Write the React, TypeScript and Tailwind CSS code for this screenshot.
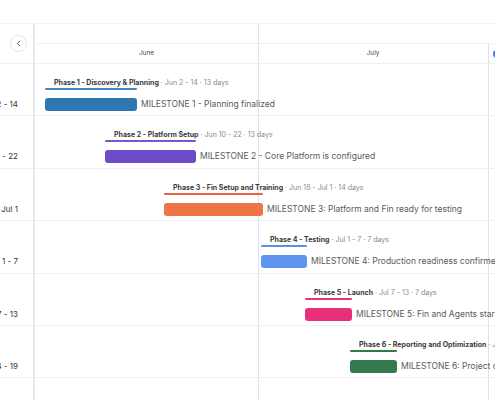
import { ChevronLeft } from "lucide-react";

type Phase = {
  id: number;
  name: string;
  range: string;
  days: number;
  left: number;
  width: number;
  bar: string;
  line: string;
  milestone: string;
};

const phases: Phase[] = [
  { id: 1, name: "Discovery & Planning", range: "Jun 2 - 14", days: 13, left: 10, width: 92, bar: "bg-[#2e77b3]", line: "bg-[#3d88c8]", milestone: "MILESTONE 1 - Planning finalized" },
  { id: 2, name: "Platform Setup", range: "Jun 10 - 22", days: 13, left: 70, width: 91, bar: "bg-[#6e4cc8]", line: "bg-[#7a55d1]", milestone: "MILESTONE 2 - Core Platform is configured" },
  { id: 3, name: "Fin Setup and Training", range: "Jun 18 - Jul 1", days: 14, left: 129, width: 99, bar: "bg-[#ef7446]", line: "bg-[#e8623b]", milestone: "MILESTONE 3: Platform and Fin ready for testing" },
  { id: 4, name: "Testing", range: "Jul 1 - 7", days: 7, left: 226, width: 46, bar: "bg-[#5f95f0]", line: "bg-[#5b8fe8]", milestone: "MILESTONE 4: Production readiness confirmed" },
  { id: 5, name: "Launch", range: "Jul 7 - 13", days: 7, left: 270, width: 47, bar: "bg-[#e8307a]", line: "bg-[#e63278]", milestone: "MILESTONE 5: Fin and Agents start handling conversations" },
  { id: 6, name: "Reporting and Optimization", range: "Jul 14 - 19", days: 6, left: 315, width: 47, bar: "bg-[#35794c]", line: "bg-[#2f7a48]", milestone: "MILESTONE 6: Project completed" },
];

function PhaseRow({ phase }: { phase: Phase }) {
  return (
    <div className="relative h-[52.4px] border-b border-[#eef0f5]">
      <div
        className="absolute top-[14px] whitespace-nowrap text-[7px] leading-[10px]"
        style={{ left: phase.left + 9 }}
      >
        <span className="font-bold text-[#3a3a3a]">
          Phase {phase.id} - {phase.name}
        </span>
        <span className="text-[#8a8a8a]">
          {" "}· {phase.range} · {phase.days} days
        </span>
      </div>
      <div
        className={`absolute top-[24px] h-[2px] rounded-full ${phase.line}`}
        style={{ left: phase.left, width: phase.width }}
      />
      <div
        className={`absolute top-[34px] h-[13px] rounded-[3px] ${phase.bar}`}
        style={{ left: phase.left, width: phase.width }}
      />
      <div
        className="absolute top-[34px] whitespace-nowrap text-[8.5px] leading-[13px] text-[#5a5a5a]"
        style={{ left: phase.left + phase.width + 4 }}
      >
        {phase.milestone}
      </div>
    </div>
  );
}

export default function App() {
  return (
    <div className="flex h-[400px] w-[495px] flex-col overflow-hidden bg-white font-['Inter',sans-serif]">
      <div className="h-[24px] shrink-0 border-b border-[#f0f1f4]" />
      <div className="flex min-h-0 flex-1">
        {/* date column */}
        <div className="w-[35px] shrink-0 overflow-hidden border-r-2 border-[#e8e9f0]">
          <div className="flex h-[40px] items-center border-b border-[#eef0f5] pl-[10px]">
            <button className="flex h-[17px] w-[17px] items-center justify-center rounded-full border border-[#e3e5ea] bg-white text-[#444]">
              <ChevronLeft size={9} strokeWidth={2.5} />
            </button>
          </div>
          {phases.map((p) => (
            <div
              key={p.id}
              className="flex h-[52.4px] items-start justify-end border-b border-[#eef0f5] pr-[15px] pt-[35px]"
            >
              <span className="whitespace-nowrap text-[8px] leading-[11px] text-[#333]">{p.range}</span>
            </div>
          ))}
        </div>

        {/* timeline */}
        <div className="relative min-w-0 flex-1 overflow-hidden">
          <div className="absolute bottom-0 left-[223px] top-0 w-px bg-[#dfe0f2]" />
          <div className="absolute bottom-0 left-[453px] top-[20px] w-px bg-[#dfe0f2]" />
          <div className="absolute left-[458px] top-[26px] h-[8px] w-[8px] rounded-full bg-[#3b7cf4]" />

          <div className="h-[20px] border-b border-[#f0f1f4]" />
          <div className="flex h-[20px] border-b border-[#eef0f5] pt-[1px] text-[6.5px] text-[#444]">
            <div className="flex w-[223px] items-center justify-center">June</div>
            <div className="flex w-[230px] items-center justify-center">July</div>
          </div>
          {phases.map((p) => (
            <PhaseRow key={p.id} phase={p} />
          ))}
        </div>
      </div>
    </div>
  );
}
